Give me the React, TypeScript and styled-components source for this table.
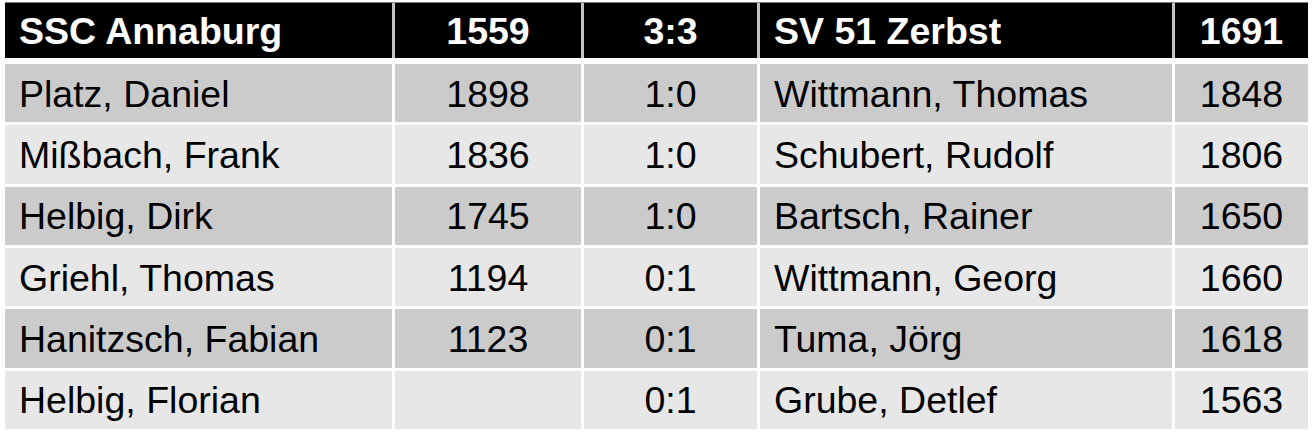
import React from "react";
import styled, { createGlobalStyle } from "styled-components";

const Global = createGlobalStyle`
  html, body { margin: 0; padding: 0; background: #ffffff; }
  body { font-family: "Liberation Sans", Arial, sans-serif; }
`;

const COLS = "387px 186px 173px 412px 133px";

const Table = styled.div`
  display: flex;
  flex-direction: column;
  width: 1303px;
  margin: 2px 0 0 5px;
`;

const HeaderRow = styled.div`
  display: grid;
  grid-template-columns: ${COLS};
  column-gap: 3px;
  height: 55px;
  border-top: 1px solid #7f7f7f;
  background: #c4c4c4;
  margin-bottom: 6px;
`;

const BodyRow = styled.div`
  display: grid;
  grid-template-columns: ${COLS};
  column-gap: 3px;
  height: 58.33px;
  margin-bottom: 3px;
  background: #ffffff;
`;

const Cell = styled.div<{ $align?: "left" | "center"; $head?: boolean; $shade?: "dark" | "light" }>`
  display: flex;
  align-items: center;
  justify-content: ${(p) => (p.$align === "center" ? "center" : "flex-start")};
  padding: 2px ${(p) => (p.$align === "center" ? "0" : "14px")} 0;
  font-size: 37.5px;
  font-weight: ${(p) => (p.$head ? 700 : 400)};
  color: ${(p) => (p.$head ? "#ffffff" : "#000000")};
  background: ${(p) => (p.$head ? "#000000" : p.$shade === "dark" ? "#cbcbcb" : "#e7e7e7")};
  white-space: nowrap;
  overflow: hidden;
`;

const header = ["SSC Annaburg", "1559", "3:3", "SV 51 Zerbst", "1691"];

const rows: string[][] = [
  ["Platz, Daniel", "1898", "1:0", "Wittmann, Thomas", "1848"],
  ["Mißbach, Frank", "1836", "1:0", "Schubert, Rudolf", "1806"],
  ["Helbig, Dirk", "1745", "1:0", "Bartsch, Rainer", "1650"],
  ["Griehl, Thomas", "1194", "0:1", "Wittmann, Georg", "1660"],
  ["Hanitzsch, Fabian", "1123", "0:1", "Tuma, Jörg", "1618"],
  ["Helbig, Florian", "", "0:1", "Grube, Detlef", "1563"],
];

const align = (i: number): "left" | "center" => (i === 0 || i === 3 ? "left" : "center");

export default function App() {
  return (
    <>
      <Global />
      <Table>
        <HeaderRow>
          {header.map((h, i) => (
            <Cell key={i} $head $align={align(i)}>
              {h}
            </Cell>
          ))}
        </HeaderRow>
        {rows.map((r, ri) => (
          <BodyRow key={ri}>
            {r.map((c, i) => (
              <Cell key={i} $align={align(i)} $shade={ri % 2 === 0 ? "dark" : "light"}>
                {c}
              </Cell>
            ))}
          </BodyRow>
        ))}
      </Table>
    </>
  );
}
